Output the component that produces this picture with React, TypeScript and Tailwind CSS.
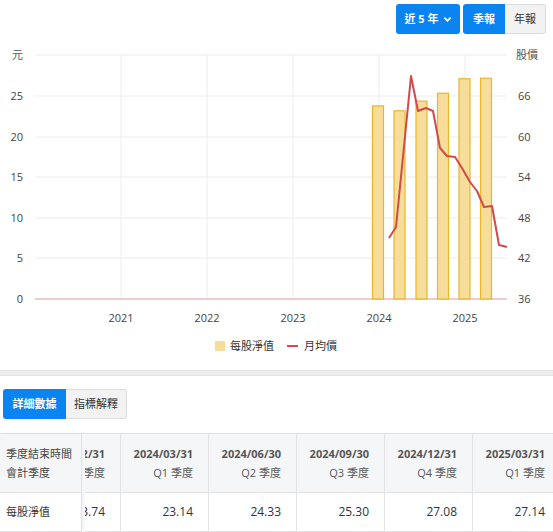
import React from "react";

const bars = [
  { x: 378, v: 23.74 },
  { x: 399.5, v: 23.14 },
  { x: 421.5, v: 24.33 },
  { x: 443, v: 25.3 },
  { x: 464.5, v: 27.08 },
  { x: 486, v: 27.14 },
];

const linePts: [number, number][] = [
  [389, 238],
  [396, 227],
  [411, 76],
  [418, 111],
  [426, 108],
  [433, 111],
  [440, 148],
  [447, 156],
  [455, 157],
  [462, 168],
  [470, 182],
  [477, 191],
  [484, 207],
  [492, 206],
  [499, 245],
  [507, 247],
];

const leftTicks = [
  { y: 96, t: "25" },
  { y: 137, t: "20" },
  { y: 177, t: "15" },
  { y: 218, t: "10" },
  { y: 258, t: "5" },
  { y: 299, t: "0" },
];
const rightTicks = [
  { y: 96, t: "66" },
  { y: 137, t: "60" },
  { y: 177, t: "54" },
  { y: 218, t: "48" },
  { y: 258, t: "42" },
  { y: 299, t: "36" },
];
const years = [
  { x: 121, t: "2021" },
  { x: 207, t: "2022" },
  { x: 293, t: "2023" },
  { x: 379, t: "2024" },
  { x: 465, t: "2025" },
];

const cols = [
  { d: "2023/12/31", q: "Q4 季度", v: "23.74" },
  { d: "2024/03/31", q: "Q1 季度", v: "23.14" },
  { d: "2024/06/30", q: "Q2 季度", v: "24.33" },
  { d: "2024/09/30", q: "Q3 季度", v: "25.30" },
  { d: "2024/12/31", q: "Q4 季度", v: "27.08" },
  { d: "2025/03/31", q: "Q1 季度", v: "27.14" },
];

const FONT = "'Open Sans','Noto Sans CJK TC',sans-serif";

function Chart() {
  const scale = 244 / 30;
  return (
    <svg
      width={553}
      height={330}
      viewBox="0 40 553 330"
      className="block"
      style={{ fontFamily: FONT }}
    >
      {[55, 96, 137, 177, 218, 258].map((y) => (
        <line key={y} x1={35} x2={507} y1={y} y2={y} stroke="#ececec" strokeWidth={1} />
      ))}
      {years.map((yr) => (
        <line key={yr.t} x1={yr.x} x2={yr.x} y1={55} y2={299} stroke="#ececec" strokeWidth={1} />
      ))}
      <line x1={35} x2={507} y1={299} y2={299} stroke="#ebb9bd" strokeWidth={1.5} />
      <text x={23} y={59} textAnchor="end" fontSize={11} fill="#555">元</text>
      {leftTicks.map((t) => (
        <text key={t.t} x={23} y={t.y + 4} textAnchor="end" fontSize={11} fill="#444">
          {t.t}
        </text>
      ))}
      <text x={516} y={59} fontSize={11} fill="#555">股價</text>
      {rightTicks.map((t) => (
        <text key={t.t} x={518} y={t.y + 4} fontSize={11} fill="#444">
          {t.t}
        </text>
      ))}
      {years.map((yr) => (
        <text key={yr.t} x={yr.x} y={322} textAnchor="middle" fontSize={11} fill="#444">
          {yr.t}
        </text>
      ))}
      {bars.map((b) => {
        const top = 299 - b.v * scale;
        return (
          <rect
            key={b.x}
            x={b.x - 5.5}
            y={top}
            width={11}
            height={299 - top}
            fill="#f6de9a"
            stroke="#ebb52c"
            strokeWidth={1.2}
          />
        );
      })}
      <polyline
        points={linePts.map((p) => p.join(",")).join(" ")}
        fill="none"
        stroke="#d04a4c"
        strokeWidth={2}
        strokeLinejoin="round"
      />
      <rect x={215} y={341} width={10} height={10} fill="#f6de9a" />
      <text x={230} y={350} fontSize={11} fill="#333">每股淨值</text>
      <line x1={287} x2={298} y1={346} y2={346} stroke="#d04a4c" strokeWidth={2} />
      <text x={304} y={350} fontSize={11} fill="#333">月均價</text>
    </svg>
  );
}

export default function App() {
  return (
    <div className="w-[553px] h-[532px] overflow-hidden bg-white" style={{ fontFamily: FONT }}>
      <div className="h-[40px] flex justify-end items-start pt-[4px] pr-[7px]">
        <button className="h-[30px] w-[64px] rounded-[3px] bg-[#0a84f0] text-white text-[11px] font-bold flex items-center justify-center gap-[4px]">
          <span>近 5 年</span>
          <svg width="9" height="9" viewBox="0 0 10 10">
            <path d="M1.5 3 L5 6.5 L8.5 3" fill="none" stroke="white" strokeWidth="2" />
          </svg>
        </button>
        <div className="flex ml-[3px]">
          <button className="h-[30px] w-[42px] rounded-l-[3px] bg-[#0a84f0] text-white text-[11px] font-bold">
            季報
          </button>
          <button className="h-[30px] w-[41px] rounded-r-[3px] bg-[#f2f2f2] border border-[#dcdcdc] border-l-0 text-[#333] text-[11px]">
            年報
          </button>
        </div>
      </div>
      <Chart />
      <div className="h-[6px] bg-[#eeeeee] border-y border-[#e4e4e4]" />
      <div className="pt-[13px] pl-[3px] flex">
        <button className="h-[30px] w-[63px] rounded-l-[3px] bg-[#0a84f0] text-white text-[11px] font-bold">
          詳細數據
        </button>
        <button className="h-[30px] w-[61px] rounded-r-[3px] bg-[#f2f2f2] border border-[#dcdcdc] border-l-0 text-[#333] text-[11px]">
          指標解釋
        </button>
      </div>
      <div className="mt-[14px] flex border-t border-[#e3e3e3] text-[12px]">
        <div className="w-[82px] shrink-0 border-r border-[#e3e3e3] shadow-[2px_0_3px_rgba(0,0,0,0.06)] relative z-10">
          <div className="h-[59px] bg-[#f5f6f8] border-b border-[#e3e3e3] pl-[6px] flex flex-col justify-center gap-[3px] text-[#444] text-[11px]">
            <div className="leading-[16px]">季度結束時間</div>
            <div className="leading-[16px]">會計季度</div>
          </div>
          <div className="h-[39px] bg-white border-b border-[#e3e3e3] pl-[6px] flex items-center text-[#333] text-[11px]">
            每股淨值
          </div>
        </div>
        <div className="flex-1 overflow-hidden ml-[3px]">
          <div className="flex ml-[-52px]">
            {cols.map((c) => (
              <div key={c.d} className="w-[88px] shrink-0 border-r border-[#e3e3e3]">
                <div className="h-[59px] bg-[#f5f6f8] border-b border-[#e3e3e3] pr-[15px] flex flex-col justify-center items-end gap-[3px]">
                  <div className="leading-[16px] font-bold text-[#555] text-[11px]">{c.d}</div>
                  <div className="leading-[16px] text-[#555] text-[11px]">{c.q}</div>
                </div>
                <div className="h-[39px] border-b border-[#e3e3e3] pr-[15px] flex items-center justify-end text-[#333] text-[12px]">
                  {c.v}
                </div>
              </div>
            ))}
          </div>
        </div>
      </div>
    </div>
  );
}
